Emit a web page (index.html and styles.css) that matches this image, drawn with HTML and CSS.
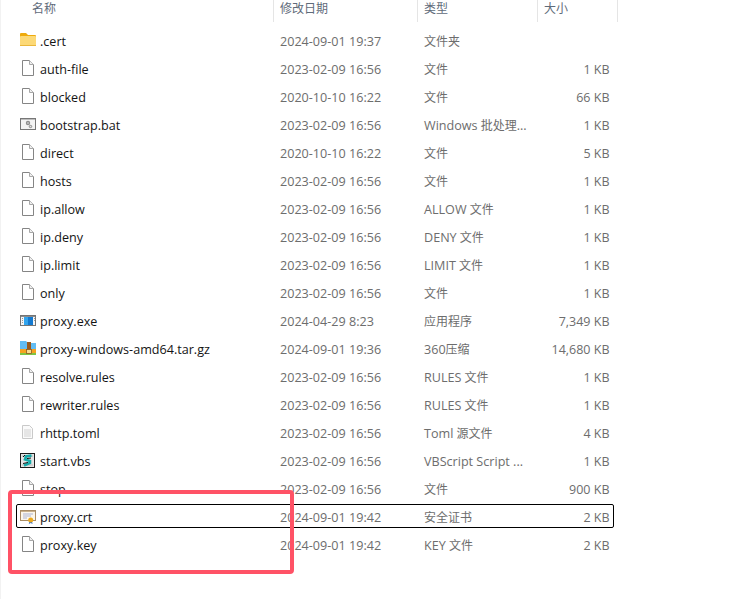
FILE: index.html
```html
<!DOCTYPE html>
<html lang="zh-CN">
<head>
<meta charset="utf-8">
<title>proxy</title>
<link rel="stylesheet" href="styles.css">
</head>
<body>
<svg class="defs" width="0" height="0">
  <symbol id="i-file" viewBox="0 0 17 18"><path d="M3.500 .5H10.500L14.500 4.500V15.500H3.500Z" fill="#fff" stroke="#858585"/><path d="M10.500 .5V4.500H14.500" fill="#f0f0f0" stroke="#a8a8a8"/></symbol>
  <symbol id="i-folder" viewBox="0 0 17 18"><path d="M1 2a1 1 0 0 1 1-1h5l2 2h7a1 1 0 0 1 1 1v2H1Z" fill="#eeaa0c"/><rect x="1" y="4" width="16" height="10" rx="1" fill="#fcd977"/><rect x="1" y="13" width="16" height="1" fill="#eab73c"/></symbol>
  <symbol id="i-bat" viewBox="0 0 17 18"><rect x="1.500" y="2.500" width="15" height="11" fill="#f4f4f4" stroke="#777"/><rect x="2" y="3" width="14" height="1" fill="#bdbdbd"/><circle cx="9" cy="7" r="2.200" fill="#8e8e8e"/><circle cx="9" cy="7" r=".8" fill="#e6e6e6"/><circle cx="11.500" cy="10.500" r="1.800" fill="#a4a4a4"/><circle cx="11.500" cy="10.500" r=".6" fill="#eee"/></symbol>
  <symbol id="i-exe" viewBox="0 0 17 18"><rect x="1.500" y="3.500" width="15" height="10" fill="#f4f4f4" stroke="#757575"/><rect x="2" y="4" width="14" height="1" fill="#8c8c8c"/><rect x="5" y="5" width="9" height="8" fill="#1379d0"/><rect x="5" y="5" width="4" height="8" fill="#31a4ee"/><rect x="3" y="6" width="1" height="1" fill="#999"/><rect x="3" y="8" width="1" height="1" fill="#999"/><rect x="3" y="10" width="1" height="1" fill="#999"/><rect x="15" y="6" width="1" height="1" fill="#999"/><rect x="15" y="8" width="1" height="1" fill="#999"/></symbol>
  <symbol id="i-zip" viewBox="0 0 17 18"><path d="M1 1h6l2 2h8v7H1Z" fill="#62bcf3"/><rect x="1" y="9" width="16" height="4" fill="#f6a320"/><rect x="1" y="13" width="16" height="2" fill="#7fc544"/><rect x="8" y="2" width="4" height="11" fill="#9a5a1e"/><rect x="7.500" y="9.500" width="5" height="4" fill="#f6dc90" stroke="#8a5a1e" stroke-width=".8"/></symbol>
  <symbol id="i-text" viewBox="0 0 17 18"><path d="M3.500 1.500H10.500L13.500 4.500V14.500H3.500Z" fill="#fafafa" stroke="#c9c9c9"/><path d="M5 6h7M5 8h7M5 10h7M5 12h7" stroke="#d2d2d2"/></symbol>
  <symbol id="i-vbs" viewBox="0 0 17 18"><rect x="1.500" y="1.500" width="14" height="14" fill="#e4e4e4" stroke="#1c1c1c"/><path d="M3 3h11v2H3ZM3 12h11v2H3Z" fill="#cfcfcf"/><path d="M12.500 3.500L7 4.500 6 7.500 11 9 11 11 5 13.500" fill="none" stroke="#14a9a9" stroke-width="2.600"/><path d="M12 6L8 6.500M9 10.500L4 11.500M6 3L4 5" stroke="#111"/></symbol>
  <symbol id="i-crt" viewBox="0 0 17 18"><rect x="1.500" y="2.500" width="15" height="10" fill="#fcf6ea" stroke="#a98d66"/><rect x="2" y="3" width="14" height="1" fill="#c8b08c"/><path d="M4 6h10M4 8h8M4 10h4" stroke="#aab4d6"/><path d="M10.500 13l-.7 3 1.900-1 1.900 1-.7-3Z" fill="#2b6fd2"/><circle cx="11.700" cy="12" r="2.500" fill="#eca81c"/></symbol>
</svg>
<div class="explorer">
  <header class="columns">
    <div class="col col-name">名称</div>
    <div class="col col-date">修改日期</div>
    <div class="col col-type">类型</div>
    <div class="col col-size">大小</div>
  </header>
  <div class="list">
    <div class="row"><svg class="icon"><use href="#i-folder"/></svg><span class="name">.cert</span><span class="cell date">2024-09-01 19:37</span><span class="cell type">文件夹</span><span class="cell size"></span></div>
    <div class="row"><svg class="icon"><use href="#i-file"/></svg><span class="name">auth-file</span><span class="cell date">2023-02-09 16:56</span><span class="cell type">文件</span><span class="cell size">1 KB</span></div>
    <div class="row"><svg class="icon"><use href="#i-file"/></svg><span class="name">blocked</span><span class="cell date">2020-10-10 16:22</span><span class="cell type">文件</span><span class="cell size">66 KB</span></div>
    <div class="row"><svg class="icon"><use href="#i-bat"/></svg><span class="name">bootstrap.bat</span><span class="cell date">2023-02-09 16:56</span><span class="cell type"><span class="lat">Windows</span> 批处理<span class="lat">...</span></span><span class="cell size">1 KB</span></div>
    <div class="row"><svg class="icon"><use href="#i-file"/></svg><span class="name">direct</span><span class="cell date">2020-10-10 16:22</span><span class="cell type">文件</span><span class="cell size">5 KB</span></div>
    <div class="row"><svg class="icon"><use href="#i-file"/></svg><span class="name">hosts</span><span class="cell date">2023-02-09 16:56</span><span class="cell type">文件</span><span class="cell size">1 KB</span></div>
    <div class="row"><svg class="icon"><use href="#i-file"/></svg><span class="name">ip.allow</span><span class="cell date">2023-02-09 16:56</span><span class="cell type"><span class="lat">ALLOW</span> 文件</span><span class="cell size">1 KB</span></div>
    <div class="row"><svg class="icon"><use href="#i-file"/></svg><span class="name">ip.deny</span><span class="cell date">2023-02-09 16:56</span><span class="cell type"><span class="lat">DENY</span> 文件</span><span class="cell size">1 KB</span></div>
    <div class="row"><svg class="icon"><use href="#i-file"/></svg><span class="name">ip.limit</span><span class="cell date">2023-02-09 16:56</span><span class="cell type"><span class="lat">LIMIT</span> 文件</span><span class="cell size">1 KB</span></div>
    <div class="row"><svg class="icon"><use href="#i-file"/></svg><span class="name">only</span><span class="cell date">2023-02-09 16:56</span><span class="cell type">文件</span><span class="cell size">1 KB</span></div>
    <div class="row"><svg class="icon"><use href="#i-exe"/></svg><span class="name">proxy.exe</span><span class="cell date">2024-04-29 8:23</span><span class="cell type">应用程序</span><span class="cell size">7,349 KB</span></div>
    <div class="row"><svg class="icon"><use href="#i-zip"/></svg><span class="name">proxy-windows-amd64.tar.gz</span><span class="cell date">2024-09-01 19:36</span><span class="cell type"><span class="lat">360</span>压缩</span><span class="cell size">14,680 KB</span></div>
    <div class="row"><svg class="icon"><use href="#i-file"/></svg><span class="name">resolve.rules</span><span class="cell date">2023-02-09 16:56</span><span class="cell type"><span class="lat">RULES</span> 文件</span><span class="cell size">1 KB</span></div>
    <div class="row"><svg class="icon"><use href="#i-file"/></svg><span class="name">rewriter.rules</span><span class="cell date">2023-02-09 16:56</span><span class="cell type"><span class="lat">RULES</span> 文件</span><span class="cell size">1 KB</span></div>
    <div class="row"><svg class="icon"><use href="#i-text"/></svg><span class="name">rhttp.toml</span><span class="cell date">2023-02-09 16:56</span><span class="cell type"><span class="lat">Toml</span> 源文件</span><span class="cell size">4 KB</span></div>
    <div class="row"><svg class="icon"><use href="#i-vbs"/></svg><span class="name">start.vbs</span><span class="cell date">2023-02-09 16:56</span><span class="cell type"><span class="lat">VBScript Script ...</span></span><span class="cell size">1 KB</span></div>
    <div class="row"><svg class="icon"><use href="#i-file"/></svg><span class="name">stop</span><span class="cell date">2023-02-09 16:56</span><span class="cell type">文件</span><span class="cell size">900 KB</span></div>
    <div class="row focused"><svg class="icon"><use href="#i-crt"/></svg><span class="name">proxy.crt</span><span class="cell date">2024-09-01 19:42</span><span class="cell type">安全证书</span><span class="cell size">2 KB</span></div>
    <div class="row"><svg class="icon"><use href="#i-file"/></svg><span class="name">proxy.key</span><span class="cell date">2024-09-01 19:42</span><span class="cell type"><span class="lat">KEY</span> 文件</span><span class="cell size">2 KB</span></div>
  </div>
  <div class="callout"></div>
</div>
</body>
</html>
```
FILE: styles.css
```css
* { box-sizing: border-box; }
html, body { margin: 0; padding: 0; background: #fff; }
body { width: 734px; height: 599px; overflow: hidden; font-family: "Open Sans", "Noto Sans CJK SC", sans-serif; font-size: 12px; }
.defs { display: block; height: 0; }
.explorer { position: relative; width: 734px; height: 599px; border-left: 1px solid #f2f2f2; }
.columns { display: grid; grid-template-columns: 274px 144px 120px 80px; height: 22px; margin-left: -1px; }
.col { line-height: 17px; color: #5f6b7a; border-right: 1px solid #e5e5e5; padding-left: 6px; }
.col-name { padding-left: 32px; }
.list { display: flex; flex-direction: column; gap: 4px; padding: 6px 0 0 15px; }
.row { display: flex; align-items: center; width: 598px; height: 24px; padding-top: 2px; border: 1px solid transparent; border-radius: 2px; }
.focused { border-color: #000; }
.icon { width: 17px; height: 18px; margin-left: 2px; flex: none; }
.name { width: 240px; margin-left: 4px; flex: none; color: #141414; font-size: 12.6px; white-space: nowrap; }
.cell { color: #6d6d6d; white-space: nowrap; flex: none; }
.date { width: 144px; font-size: 12.6px; }
.type { width: 113px; }
.lat { font-size: 12.6px; }
.size { width: 72.500px; text-align: right; font-size: 12.5px; }
.callout { position: absolute; left: 7px; top: 490px; width: 286px; height: 84px; border: 4px solid #ff5266; border-radius: 4px; }
```
